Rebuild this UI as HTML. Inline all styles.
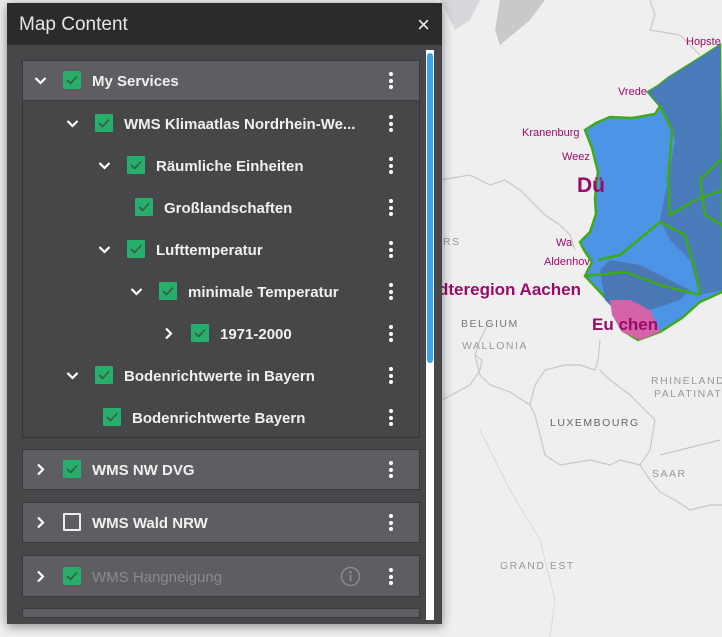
<!DOCTYPE html>
<html><head><meta charset="utf-8"><style>
*{margin:0;padding:0;box-sizing:border-box}
body{width:722px;height:637px;overflow:hidden;background:#efefef;font-family:"Liberation Sans",sans-serif;position:relative}
.ab{position:absolute}
.panel{left:7px;top:3px;width:435px;height:621px;background:#474749;box-shadow:0 2px 10px rgba(0,0,0,.45)}
.hdr{left:0;top:0;width:435px;height:42px;background:#2b2b2b;color:#e6e6e6;font-size:19px;line-height:44px;padding-left:12px}
.box{background:#474749;border:1px solid #333}
.hrow{background:#5e5e62;border:1px solid #3a3a3c}
.cb{width:18px;height:18px;background:#26ae6a;border-radius:1px}
.cb svg{position:absolute;left:3px;top:4px}
.cbe{width:18px;height:18px;border:2px solid #eee;border-radius:1px}
.t{color:#f0f0f0;font-size:15px;font-weight:bold;white-space:nowrap;line-height:18px}
.dots{width:4px}
.dots i{display:block;width:4px;height:4px;border-radius:2px;background:#fff;margin-bottom:2.5px}
</style></head><body>
<svg class="ab" style="left:0;top:0" width="722" height="637">
<path d="M440 0 L480 0 L470 20 L455 30 Z" fill="#d8d8dc"/>
<path d="M500 0 L545 0 L530 20 L500 45 L495 30 Z" fill="#c9c9cc"/>
<g fill="none" stroke="#c8c8c8" stroke-width="1.2">
<path d="M650 0 L655 15 L650 30 L680 35 L690 45 L700 55"/>
<path d="M440 180 L470 175 L490 185 L505 180 L520 190 L530 200 L545 215 L560 225 L570 235 L575 250"/>
<path d="M442 400 L470 385 L480 370 L482 360 L475 355 L480 340 L490 320"/>
<path d="M475 355 L480 375 L490 385 L510 392 L530 405 L535 415 L545 455 L560 465 L590 460 L610 465 L620 460 L640 465 L650 480 L660 492 L675 500 L690 510 L710 505 L722 505"/>
<path d="M530 405 L535 385 L545 370 L565 365 L580 365 L595 370 L598 360 L600 340"/>
<path d="M640 465 L650 450 L655 420 L640 405 L630 395 L610 380 L600 370"/>
<path d="M660 455 L700 445 L720 440"/>
</g>
<g fill="none" stroke="#dadada" stroke-width="1"><path d="M480 430 L510 490 L540 540 L555 600 L550 637"/></g>
<path d="M720 45 L700 58 L668 78 L658 86 L648 92 L660 106 L655 114 L632 118 L610 117 L596 123 L585 130 L592 148 L598 172 L595 198 L596 214 L590 232 L580 242 L584 250 L592 262 L585 276 L600 292 L612 305 L622 330 L638 340 L660 332 L682 318 L700 302 L722 292 Z" fill="#4d94e6" stroke="#3eaa18" stroke-width="2.5"/>
<path d="M720 45 L700 58 L668 78 L658 86 L648 92 L660 106 L675 140 L668 180 L660 220 L670 240 L690 260 L700 295 L722 290 Z" fill="#4a7cbc"/>
<path d="M600 270 L610 260 L640 265 L660 275 L690 290 L680 300 L650 310 L620 315 L605 300 Z" fill="#4a78b4"/>
<path d="M610 300 L630 300 L650 310 L660 332 L640 340 L622 332 L612 315 Z" fill="#d463a8"/>
<g fill="none" stroke="#3eaa18" stroke-width="2.5">
<path d="M660 106 L672 130 L668 180 L670 215 L695 200 L722 190"/>
<path d="M598 260 L620 255 L660 222 L685 235 L695 270 L700 295"/>
<path d="M585 276 L625 272 L660 285 L700 295"/>
<path d="M720 160 L700 180 L705 215 L722 225"/>
</g>
<g font-family="Liberation Sans,sans-serif" fill="#9a0a6a" font-size="11">
<text x="686" y="45">Hopste</text><text x="618" y="95">Vrede</text>
<text x="522" y="136">Kranenburg</text><text x="562" y="160">Weez</text>
<text x="556" y="246">Wa</text><text x="544" y="265">Aldenhov</text>
<text x="577" y="192" font-size="21" font-weight="bold">Dü</text>
<text x="438" y="295" font-size="17" font-weight="bold">dteregion Aachen</text>
<text x="592" y="330" font-size="17" font-weight="bold">Eu     chen</text>
</g>
<g font-family="Liberation Sans,sans-serif" fill="#777" font-size="10.5" letter-spacing="1.5">
<text x="461" y="327">BELGIUM</text><text x="462" y="349" fill="#999">WALLONIA</text>
<text x="550" y="426" fill="#666">LUXEMBOURG</text><text x="651" y="384" fill="#999">RHINELAND</text><text x="654" y="397" fill="#999">PALATINAT</text>
<text x="652" y="477" fill="#999">SAAR</text><text x="500" y="569" fill="#999">GRAND EST</text><text x="443" y="245" fill="#999">RS</text>
</g>
</svg>
<div class="ab panel">
<div class="ab hdr">Map Content<span class="ab" style="right:12px;top:0;font-size:22px;color:#eee">×</span></div>
<div class="ab" style="left:419px;top:47px;width:8px;height:570px;background:#fff"></div>
<div class="ab" style="left:420px;top:50px;width:6px;height:310px;background:#3aa6ea;border-radius:3px"></div>
</div>
<div class="ab box" style="left:22px;top:60px;width:398px;height:378px"></div>
<div class="ab hrow" style="left:22px;top:60px;width:398px;height:41px"></div>
<div class="ab hrow" style="left:22px;top:449px;width:398px;height:41px"></div>
<div class="ab hrow" style="left:22px;top:502px;width:398px;height:41px"></div>
<div class="ab hrow" style="left:22px;top:555px;width:398px;height:42px"></div>
<div class="ab hrow" style="left:22px;top:608px;width:398px;height:10px"></div>
<div id="rows"></div>
<script>
var R=[[80,63,'d','My Services',1],[123,95,'d','WMS Klimaatlas Nordrhein-We...',1],[165,127,'d','Räumliche Einheiten',1],[207,135,'','Großlandschaften',1],[249,127,'d','Lufttemperatur',1],[291,159,'d','minimale Temperatur',1],[333,191,'r','1971-2000',1],[375,95,'d','Bodenrichtwerte in Bayern',1],[417,103,'','Bodenrichtwerte Bayern',1],[469,63,'r','WMS NW DVG',1],[522,63,'r','WMS Wald NRW',0],[576,63,'r','WMS Hangneigung',2]];
var h='';R.forEach(function(r){var y=r[0],x=r[1];
if(r[2]=='d')h+='<svg class="ab" style="left:'+(x-29)+'px;top:'+(y-4)+'px" width="13" height="10"><path d="M1.5 2 L6.5 7 L11.5 2" fill="none" stroke="#fff" stroke-width="2.2"/></svg>';
if(r[2]=='r')h+='<svg class="ab" style="left:'+(x-27)+'px;top:'+(y-6)+'px" width="10" height="13"><path d="M2 1.5 L7 6.5 L2 11.5" fill="none" stroke="#fff" stroke-width="2.2"/></svg>';
if(r[4])h+='<div class="ab cb" style="left:'+x+'px;top:'+(y-9)+'px"><svg width="12" height="10"><path d="M1 5 L4.5 8.5 L11 1.5" fill="none" stroke="#3a5a48" stroke-width="1.6"/></svg></div>';
else h+='<div class="ab cbe" style="left:'+x+'px;top:'+(y-9)+'px"></div>';
h+='<div class="ab t" style="left:'+(x+29)+'px;top:'+(y-7)+'px;'+(r[4]==2?'color:#8a8a8c;font-weight:normal':'')+'">'+r[3]+'</div>';
h+='<div class="ab dots" style="left:389px;top:'+(y-8)+'px"><i></i><i></i><i></i></div>';
if(r[4]==2)h+='<svg class="ab" style="left:340px;top:'+(y-10)+'px" width="21" height="21"><circle cx="10.5" cy="10.5" r="9" fill="none" stroke="#8a8a8c" stroke-width="1.5"/><circle cx="10.5" cy="6.3" r="1.3" fill="#8a8a8c"/><path d="M10.5 9 V15.5" stroke="#8a8a8c" stroke-width="1.8"/></svg>';
});document.getElementById('rows').innerHTML=h;
</script>
</body></html>
